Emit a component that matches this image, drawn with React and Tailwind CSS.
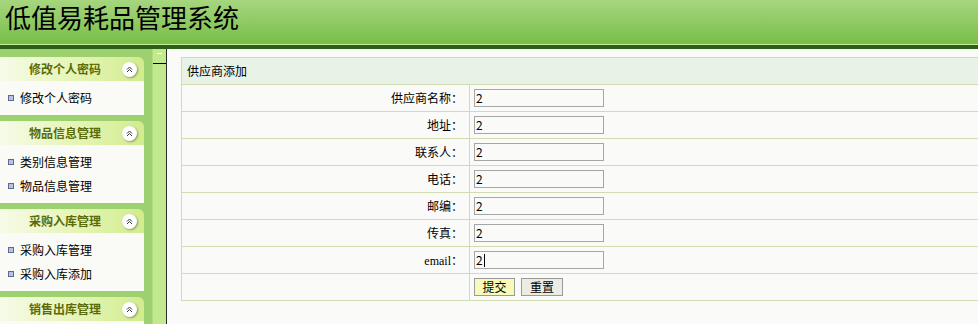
import React from 'react';

const FONT = { fontFamily: '"Noto Sans CJK SC", "Liberation Sans", sans-serif' };

const MENU = [
  { title: '修改个人密码', items: ['修改个人密码'] },
  { title: '物品信息管理', items: ['类别信息管理', '物品信息管理'] },
  { title: '采购入库管理', items: ['采购入库管理', '采购入库添加'] },
  { title: '销售出库管理', items: [] },
];

const FIELDS = ['供应商名称', '地址', '联系人', '电话', '邮编', '传真', 'email'];

function CollapseIcon() {
  return (
    <span className="w-[15px] h-[15px] rounded-full bg-white shadow-[1px_1px_2px_rgba(0,0,0,0.35)] flex items-center justify-center">
      <svg width="7" height="7" viewBox="0 0 7 7" fill="none" stroke="#333" strokeWidth="1">
        <path d="M1 3.5 L3.5 1 L6 3.5" />
        <path d="M1 6 L3.5 3.5 L6 6" />
      </svg>
    </span>
  );
}

function MenuSection({ section }) {
  return (
    <div className="mb-[6px]">
      <div className="h-[24px] rounded-tr-[6px] bg-gradient-to-r from-[#f6fbe8] via-[#e6f5b8] to-[#d2ec8e] flex items-center">
        <span className="flex-1 text-center text-[12px] font-bold text-[#5b6b08] pl-[8px]">{section.title}</span>
        <span className="pr-[7px]">
          <CollapseIcon />
        </span>
      </div>
      <div className="bg-[#fafaf6] pt-[5px] pb-[5px] min-h-[10px]">
        {section.items.map((item) => (
          <div key={item} className="h-[24px] flex items-center pl-[8px] text-[12px] text-black">
            <span className="w-[6px] h-[6px] border border-[#5a6a90] bg-[#b8c4dc] mr-[6px]" />
            {item}
          </div>
        ))}
      </div>
    </div>
  );
}

export default function App() {
  return (
    <div className="w-[978px] h-[324px] overflow-hidden bg-[#fafaf8]" style={FONT}>
      {/* 顶部标题 */}
      <div className="h-[44px] bg-gradient-to-b from-[#a6d67e] to-[#78be47] pl-[5px] flex items-start">
        <h1 className="text-[26px] leading-[34px] text-black">低值易耗品管理系统</h1>
      </div>
      <div className="h-[1px] bg-[#c8ee9e]" />
      <div className="h-[4px] bg-[#2b5e17]" />

      <div className="flex h-[275px]">
        {/* 左侧菜单 */}
        <div className="w-[152px] bg-[#9dd16f] pt-[8px] pr-[8px] overflow-hidden">
          {MENU.map((s) => (
            <MenuSection key={s.title} section={s} />
          ))}
        </div>

        {/* 分隔条 */}
        <div className="w-[15px] bg-[#c3e98f] border-l border-l-[#aedc7e] border-r border-r-[#2a2a2a] flex flex-col">
          <div className="h-[15px] border-b border-b-black flex items-start justify-center pt-[4px]">
            <span className="w-[5px] h-[1px] bg-white" />
          </div>
        </div>

        {/* 内容区 */}
        <div className="flex-1 overflow-hidden pl-[14px] pt-[8px]">
          <table className="w-[830px] border-collapse text-[12px] text-black">
            <tbody>
              <tr className="h-[27px] bg-[#e8f2e7]">
                <td colSpan={2} className="border border-[#d3dbb2] pl-[5px]">供应商添加</td>
              </tr>
              {FIELDS.map((f) => (
                <tr key={f} className="h-[27px]">
                  <td className="w-[288px] border border-[#d3dbb2] text-right pr-[6px]">
                    {f === 'email' ? (
                      <span style={{ fontFamily: '"Liberation Serif", serif' }}>{f}</span>
                    ) : (
                      f
                    )}
                    ：
                  </td>
                  <td className="border border-[#d3dbb2] pl-[4px]">
                    <div className="w-[130px] h-[18px] border border-[#a6a6a6] bg-[#fafaf8] text-[12px] leading-[16px] pl-[1px] flex items-center">
                      2{f === 'email' && <span className="w-[1px] h-[13px] bg-black ml-[1px]" />}
                    </div>
                  </td>
                </tr>
              ))}
              <tr className="h-[27px]">
                <td className="border border-[#d3dbb2]" />
                <td className="border border-[#d3dbb2] pl-[4px]">
                  <div className="flex gap-[6px]">
                    <button className="w-[41px] h-[18px] border border-[#9a9a9a] bg-[#f8fbb8] text-[12px] leading-[14px]">提交</button>
                    <button className="w-[42px] h-[18px] border border-[#9a9a9a] bg-[#ecece4] text-[12px] leading-[14px]">重置</button>
                  </div>
                </td>
              </tr>
            </tbody>
          </table>
        </div>
      </div>
    </div>
  );
}
